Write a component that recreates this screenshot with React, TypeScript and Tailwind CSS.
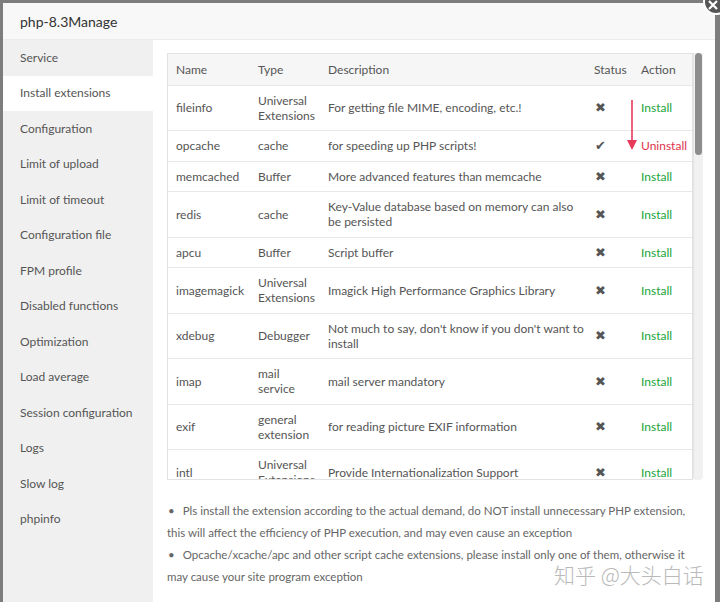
import { useState } from 'react'

type Ext = {
  name: string
  type: string
  desc: string
  installed?: boolean
}

const exts: Ext[] = [
  { name: 'fileinfo', type: 'Universal Extensions', desc: 'For getting file MIME, encoding, etc.!' },
  { name: 'opcache', type: 'cache', desc: 'for speeding up PHP scripts!', installed: true },
  { name: 'memcached', type: 'Buffer', desc: 'More advanced features than memcache' },
  { name: 'redis', type: 'cache', desc: 'Key-Value database based on memory can also be persisted' },
  { name: 'apcu', type: 'Buffer', desc: 'Script buffer' },
  { name: 'imagemagick', type: 'Universal Extensions', desc: 'Imagick High Performance Graphics Library' },
  { name: 'xdebug', type: 'Debugger', desc: "Not much to say, don't know if you don't want to install" },
  { name: 'imap', type: 'mail service', desc: 'mail server mandatory' },
  { name: 'exif', type: 'general extension', desc: 'for reading picture EXIF information' },
  { name: 'intl', type: 'Universal Extensions', desc: 'Provide Internationalization Support' },
]

const menu = [
  'Service',
  'Install extensions',
  'Configuration',
  'Limit of upload',
  'Limit of timeout',
  'Configuration file',
  'FPM profile',
  'Disabled functions',
  'Optimization',
  'Load average',
  'Session configuration',
  'Logs',
  'Slow log',
  'phpinfo',
]

export default function App() {
  const [active, setActive] = useState(1)

  return (
    <div
      className="relative w-[720px] h-[602px] overflow-hidden bg-[#7d7d7d] pt-[3px] pl-[3px] pr-[5px]"
      style={{ fontFamily: '"Lato", "Noto Sans", sans-serif' }}
    >
      <div className="flex flex-col h-full bg-white">
        {/* title */}
        <div className="h-[37px] shrink-0 flex items-center px-[17px] bg-[#f8f8f8] border-b border-[#ececec] text-[14px] text-[#333]">
          php-8.3Manage
        </div>

        <div className="flex flex-1 min-h-0">
          {/* sidebar */}
          <div className="w-[150px] shrink-0 bg-[#f0f0f0]">
            {menu.map((m, i) => (
              <div
                key={m}
                onClick={() => setActive(i)}
                className={
                  'h-[35.5px] flex items-center px-[17px] text-[12px] text-[#555] whitespace-nowrap cursor-pointer ' +
                  (i === active ? 'bg-white' : '')
                }
              >
                {m}
              </div>
            ))}
          </div>

          {/* content */}
          <div className="flex-1 pl-[14px] pt-[13px] pr-[9px]">
            <div className="flex h-[427px]">
              <div className="w-[526px] overflow-hidden border border-[#e2e2e2]">
                <table className="w-full table-fixed border-collapse text-[12px] text-[#555] leading-[15px]">
                  <colgroup>
                    <col className="w-[82px]" />
                    <col className="w-[70px]" />
                    <col className="w-[266px]" />
                    <col className="w-[47px]" />
                    <col />
                  </colgroup>
                  <thead>
                    <tr className="bg-[#f6f6f6] h-[31px] text-left">
                      <th className="font-normal pl-[8px]">Name</th>
                      <th className="font-normal pl-[8px]">Type</th>
                      <th className="font-normal pl-[8px]">Description</th>
                      <th className="font-normal pl-[8px]">Status</th>
                      <th className="font-normal pl-[8px]">Action</th>
                    </tr>
                  </thead>
                  <tbody>
                    {exts.map((e) => (
                      <tr key={e.name} className="border-t border-[#e8e8e8]">
                        <td className="pl-[8px] py-[7.25px] align-middle">{e.name}</td>
                        <td className="pl-[8px] pr-[4px] py-[7.25px] align-middle">{e.type}</td>
                        <td className="pl-[8px] pr-[1px] py-[7.25px] align-middle">{e.desc}</td>
                        <td
                          className="pl-[9px] py-[7.25px] align-middle text-[#555] text-[13px]"
                          style={{ fontFamily: '"DejaVu Sans", sans-serif' }}
                        >
                          {e.installed ? '✔' : '✖'}
                        </td>
                        <td className="pl-[8px] py-[7.25px] align-middle">
                          {e.installed ? (
                            <span className="text-[#e0324b]">Uninstall</span>
                          ) : (
                            <span className="text-[#20a53a]">Install</span>
                          )}
                        </td>
                      </tr>
                    ))}
                  </tbody>
                </table>
              </div>
              {/* scrollbar */}
              <div className="w-[10px] bg-[#f1f1f1] border-l border-[#e4e4e4] rounded-b-[4px]">
                <div className="h-[102px] bg-[#8d8d8d] rounded-[5px] mx-[1px]" />
              </div>
            </div>

            <ul className="mt-[20px] text-[11.5px] leading-[22px] text-[#666] pr-[2px]">
              <li>
                <span className="pl-[1px] pr-[8px]">•</span>Pls install the extension according to the actual demand, do NOT
                install unnecessary PHP extension, this will affect the efficiency of PHP execution, and may even cause an
                exception
              </li>
              <li>
                <span className="pl-[1px] pr-[8px]">•</span>Opcache/xcache/apc and other script cache extensions, please
                install only one of them, otherwise it may cause your site program exception
              </li>
            </ul>
          </div>
        </div>
      </div>

      {/* annotation arrow */}
      <svg className="absolute left-[626px] top-[100px]" width="12" height="52" viewBox="0 0 12 52">
        <line x1="6" y1="0" x2="6" y2="42" stroke="#e8395a" strokeWidth="1.6" />
        <path d="M1 40 L11 40 L6 50 Z" fill="#e8395a" />
      </svg>

      {/* close button */}
      <div className="absolute left-[703px] top-[-11px] w-[26px] h-[26px] rounded-full bg-[#555] border-2 border-white flex items-center justify-center">
        <svg width="12" height="12" viewBox="0 0 12 12" className="mt-[6px] mr-[6px]">
          <path d="M2 2 L10 10 M10 2 L2 10" stroke="#fff" strokeWidth="2.2" />
        </svg>
      </div>

      {/* watermark */}
      <div
        className="absolute left-[554px] top-[560px] text-[21px] leading-[28px] text-[#a9a9a9] opacity-80 whitespace-nowrap"
        style={{ fontFamily: '"Noto Sans CJK SC", sans-serif', fontWeight: 300 }}
      >
        知乎 @大头白话
      </div>
    </div>
  )
}
